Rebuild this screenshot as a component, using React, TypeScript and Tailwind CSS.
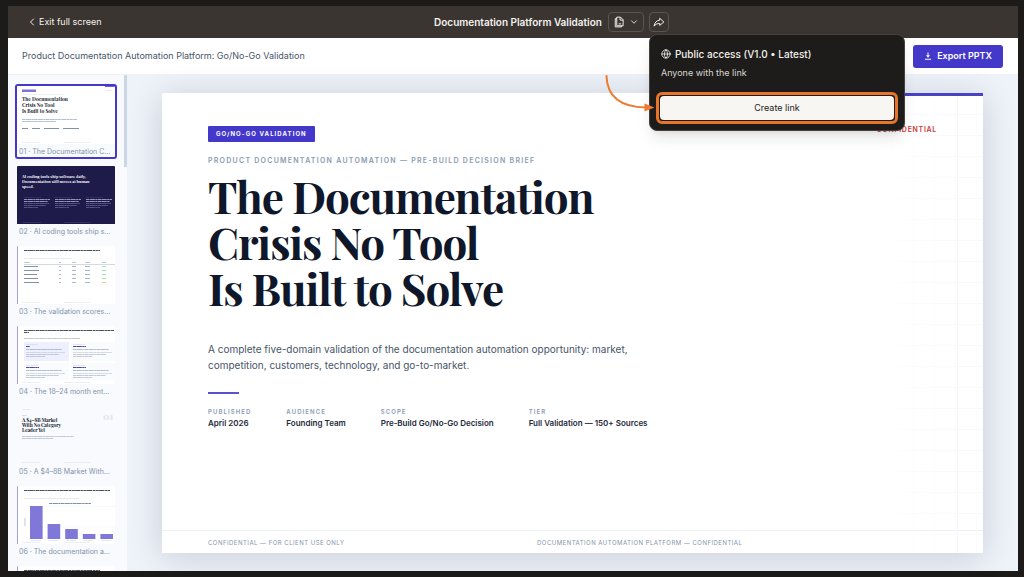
import type { FunctionComponent, ReactNode } from "react";
import { ChevronDown, ChevronLeft, Globe } from "lucide-react";

const META = [
  { label: "Published", value: "April 2026" },
  { label: "Audience", value: "Founding Team" },
  { label: "Scope", value: "Pre-Build Go/No-Go Decision" },
  { label: "Tier", value: "Full Validation — 150+ Sources" },
];

const SERIF = "'Playfair Display', 'Liberation Serif', serif";

const Thumb: FunctionComponent<{ bg: string; children?: ReactNode }> = ({ bg, children }) => (
  <svg viewBox="0 0 98 58" className="block w-full h-[58px]" preserveAspectRatio="none" aria-hidden="true">
    <rect width="98" height="58" fill={bg} />
    {children}
  </svg>
);

// a row of tiny unreadable copy
const Line = ({ x, y, w, color = "#cbd5e1", h = 1 }: { x: number; y: number; w: number; color?: string; h?: number }) => (
  <path d={`M${x} ${y}h${w}`} stroke={color} strokeWidth={h} strokeDasharray="3.2 0.3 5.4 0.4 2.3 0.3" />
);

const FooterLines = () => (
  <>
    <Line x={5} y={56.5} w={18} color="#dfe5ec" h={0.7} />
    <Line x={47} y={56.5} w={26} color="#dfe5ec" h={0.7} />
  </>
);

const CoverThumb = () => (
  <Thumb bg="#ffffff">
    <rect x="88" width="10" height="0.8" fill="#4338ca" />
    <rect x="5" y="3.5" width="14" height="2.5" fill="#7c74dc" />
    <Line x={5} y={8.5} w={42} color="#dfe4eb" h={0.6} />
    <Line x={89} y={4.5} w={6} color="#f1c9c9" h={0.6} />
    <g fontFamily={SERIF} fontWeight="700" fontSize="5" fill="#0f172a">
      <text x="5" y="15">The Documentation</text>
      <text x="5" y="21">Crisis No Tool</text>
      <text x="5" y="27">Is Built to Solve</text>
    </g>
    <Line x={5} y={33.5} w={55} color="#94a3b8" h={0.7} />
    <Line x={5} y={35.5} w={34} color="#94a3b8" h={0.7} />
    <path d="M5 42.500h6M15 42.500h8M27 42.500h15M46 42.500h16" stroke="#64748b" strokeWidth="0.8" />
    <FooterLines />
  </Thumb>
);

const DarkThumb = () => (
  <Thumb bg="#1e1b4b">
    <g fontFamily={SERIF} fontWeight="700" fontSize="4" fill="#ffffff">
      <text x="5" y="12">AI coding tools ship software daily,</text>
      <text x="5" y="17">Documentation still moves at human</text>
      <text x="5" y="22">speed.</text>
    </g>
    {[7, 38, 69].map((x) => (
      <g key={x}>
        <Line x={x} y={31.5} w={17} color="#413e75" h={0.6} />
        <Line x={x} y={33.5} w={26} color="#b6b4d3" h={0.8} />
        <Line x={x} y={35.5} w={24} color="#b6b4d3" h={0.8} />
        <Line x={x} y={37.5} w={25} color="#6f6b9c" h={0.7} />
        <Line x={x} y={39.5} w={22} color="#6f6b9c" h={0.7} />
        <Line x={x} y={41.5} w={14} color="#6f6b9c" h={0.7} />
      </g>
    ))}
    <Line x={6} y={56.5} w={18} color="#48457a" h={0.5} />
    <Line x={47} y={56.5} w={26} color="#48457a" h={0.5} />
  </Thumb>
);

const TableThumb = () => (
  <Thumb bg="#ffffff">
    <rect width="1" height="58" fill="#a49ee2" />
    <Line x={7} y={4.5} w={76} color="#334155" h={0.9} />
    <Line x={7} y={12.5} w={48} color="#dbe1e9" h={0.7} />
    <path d="M7 18.500h91" stroke="#a9b4c4" strokeWidth="0.5" />
    {[16.5, 20.5, 24.5, 28.5, 32.5, 36.5].map((y, i) => (
      <g key={y} strokeWidth={i ? 0.8 : 0.6}>
        <path d={`M7 ${y}h${i ? 13 + (i % 3) : 6}`} stroke={i ? "#64748b" : "#94a3b8"} />
        <path d={`M42 ${y}h2M55 ${y}h4M68 ${y}h5`} stroke="#94a3b8" />
        <path d={`M85 ${y}h4`} stroke={i === 0 ? "#94a3b8" : i === 5 ? "#f5c96b" : "#86d9a0"} />
      </g>
    ))}
    <FooterLines />
  </Thumb>
);

const CardsThumb = () => (
  <Thumb bg="#ffffff">
    <rect width="1" height="58" fill="#a49ee2" />
    <Line x={7} y={4.5} w={90} color="#334155" h={0.9} />
    <Line x={7} y={6.5} w={5} color="#334155" h={0.9} />
    <Line x={7} y={12.5} w={56} color="#94a3b8" h={0.6} />
    <rect x="7" y="16" width="45" height="19" fill="#eef0ff" />
    <rect x="54" y="16" width="44" height="19" fill="#fafbfd" />
    <rect x="7" y="37" width="45" height="17" fill="#fafbfd" />
    <rect x="54" y="37" width="44" height="17" fill="#fafbfd" />
    {[
      [9, 18.5],
      [56, 18.5],
      [9, 39.5],
      [56, 39.5],
    ].map(([x, y]) => (
      <g key={`${x}-${y}`}>
        <Line x={x} y={y} w={12} h={0.6} />
        <Line x={x} y={y + 2} w={x === 9 && y < 20 ? 4 : 13} color="#4c48a0" h={1.2} />
        <Line x={x} y={y + 5} w={36} color="#94a3b8" h={0.7} />
        <Line x={x} y={y + 8} w={39} color="#c3cbd8" h={0.7} />
        <Line x={x} y={y + 10} w={33} color="#aab4c4" h={0.7} />
        <Line x={x} y={y + 12} w={19} color="#aab4c4" h={0.7} />
      </g>
    ))}
    <FooterLines />
  </Thumb>
);

const ChapterThumb = () => (
  <Thumb bg="#f8fafd">
    <Line x={5} y={3.5} w={8} color="#dbe1e9" h={0.7} />
    <Line x={5} y={9.5} w={5} color="#cbd0f0" h={0.8} />
    <g fontFamily={SERIF} fontWeight="700" fill="#0f172a" fontSize="5" letterSpacing="-0.1">
      <text x="5" y="16">A $4–8B Market</text>
      <text x="5" y="21">With No Category</text>
      <text x="5" y="26">Leader Yet</text>
    </g>
    <text x="86" y="14" fontFamily={SERIF} fontWeight="700" fontSize="10" fill="#dde4ed">
      01
    </text>
    <Line x={5} y={30.5} w={52} color="#a7b3c3" h={0.7} />
    <Line x={5} y={32.5} w={31} color="#a7b3c3" h={0.7} />
    <FooterLines />
  </Thumb>
);

const ChartThumb = () => (
  <Thumb bg="#ffffff">
    <rect width="1" height="58" fill="#a49ee2" />
    <Line x={7} y={4.5} w={86} color="#334155" h={0.9} />
    <Line x={7} y={12.5} w={55} color="#dbe1e9" h={0.7} />
    <Line x={32} y={17.5} w={42} color="#64748b" h={0.8} />
    <path d="M9 20.500h89M9 41h89" stroke="#eef1f5" strokeWidth="0.5" />
    <path d="M8 32v8" stroke="#94a3b8" strokeWidth="0.6" />
    {[33, 15, 10, 5, 5].map((h, i) => (
      <g key={i}>
        <rect x={13 + i * 17.6} y={53 - h} width="12.6" height={h} fill="#8078d8" />
        <Line x={14 + i * 17.6} y={54.5} w={10} h={0.6} />
      </g>
    ))}
    <FooterLines />
  </Thumb>
);

const SLIDES = [
  { caption: "01 · The Documentation C…", thumb: <CoverThumb /> },
  { caption: "02 · AI coding tools ship s…", thumb: <DarkThumb /> },
  { caption: "03 · The validation scores…", thumb: <TableThumb /> },
  { caption: "04 · The 18–24 month ent…", thumb: <CardsThumb /> },
  { caption: "05 · A $4–8B Market With…", thumb: <ChapterThumb /> },
  { caption: "06 · The documentation a…", thumb: <ChartThumb /> },
  { caption: "", thumb: <TableThumb /> },
];

const SharePopover = () => (
  <div className="absolute top-[22px] left-0 z-20 w-[256px] rounded-lg border border-[#45423e] bg-[#1d1c1a] shadow-lg">
    <div className="px-[11px] pt-3 text-[#f3f1ed]">
      <h2 className="flex items-center gap-1 text-[10px] leading-[14px] font-medium whitespace-nowrap">
        <Globe className="h-[10px] w-[10px]" strokeWidth={2} />
        Public access (V1.0 • Latest)
      </h2>
      <p className="mt-1 text-[9px] leading-4 text-[#d9d6d1]">Anyone with the link</p>
    </div>
    <div className="mx-[6px] mt-[11px] mb-[6px] rounded-md border-[3px] border-[#e8742a] p-px">
      <button type="button" className="block w-full rounded bg-[#f8f6f2] text-center text-[9px] leading-6 text-[#1d1c1a]">
        Create link
      </button>
    </div>
    <svg className="absolute top-[39px] -left-12 h-10 w-[54px]" viewBox="0 0 54 40" fill="none" aria-hidden="true">
      <path d="M4.500 2C5 20 15 33 44 33.500" stroke="#ee7a30" strokeWidth="2" strokeLinecap="round" />
      <path d="M42.500 29.500l10 4-10 4z" fill="#ee7a30" />
    </svg>
  </div>
);

const TopBar = () => (
  <header className="grid h-8 shrink-0 grid-cols-[1fr_auto_1fr] items-center bg-[#3a3530] pr-2 pl-[18px] text-[#f3f1ed]">
    <button type="button" className="flex items-center gap-px justify-self-start text-[9px]">
      <ChevronLeft className="h-3 w-3" strokeWidth={2} />
      Exit full screen
    </button>
    <h1 className="text-[10px] font-semibold whitespace-nowrap">Documentation Platform Validation</h1>
    <div className="flex items-center gap-[5px] pl-[6px]">
      <button
        type="button"
        aria-label="Versions"
        className="flex h-5 w-9 items-center justify-center gap-1 rounded border border-[#5a554f]"
      >
        <svg className="h-3 w-3" viewBox="0 0 16 16" fill="none" stroke="currentColor" strokeWidth="1.300" strokeLinejoin="round">
          <path d="M5 3.500H3v11h8.500V13M5 1.500h5l3.500 3.500V13H5zM9.500 1.500v4h4M7.500 10.500h3.500" />
        </svg>
        <ChevronDown className="h-[10px] w-[10px]" strokeWidth={2} />
      </button>
      <div className="relative">
        <button
          type="button"
          aria-label="Share"
          className="flex h-5 w-5 items-center justify-center rounded border border-[#5a554f]"
        >
          <svg className="h-3 w-3" viewBox="0 0 16 16" fill="none" stroke="currentColor" strokeWidth="1.300" strokeLinejoin="round">
            <path d="M9 3l5.500 5L9 12.500V10C5.500 10 3 11 1.500 13.500 2 9 4.500 6 9 5.500z" />
          </svg>
        </button>
        <SharePopover />
      </div>
    </div>
  </header>
);

const Sidebar = () => (
  <aside className="flex w-[119px] shrink-0 overflow-hidden bg-[#f8fafd]">
    <ul className="flex w-[109px] flex-col gap-[5px] pt-[9px] pl-[7px]">
      {SLIDES.map((slide, i) => (
        <li key={slide.caption}>
          <button
            type="button"
            className={`block w-full overflow-hidden rounded-[3px] border-2 text-left ${
              i === 0 ? "border-[#4338ca]" : "border-transparent"
            }`}
          >
            {slide.thumb}
            <span className="block pt-[3px] pl-[2px] text-[7px] leading-[10px] whitespace-nowrap text-[#8292ab]">
              {slide.caption}
            </span>
          </button>
        </li>
      ))}
    </ul>
    <div className="ml-auto h-[92px] w-[3px] bg-[#cdd6e6]" />
  </aside>
);

const Slide = () => (
  <article className="relative flex flex-1 flex-col bg-white shadow-[0_4px_32px_rgba(15,23,42,0.16)]">
    {/* faint grid on the right edge */}
    <div className="pointer-events-none absolute inset-y-0 right-0 w-28 bg-[linear-gradient(to_right,#fafbfc_1px,transparent_1px),linear-gradient(to_bottom,#f8f9fb_1px,transparent_1px)] mask-l-from-20% bg-[size:21px_21px]" />
    <div className="absolute inset-y-0 right-[25px] w-px bg-[#f6f7f9]" />
    <div className="absolute top-0 right-0 h-[3px] w-24 bg-[#4b41c4]" />
    <span className="absolute top-8 right-[46px] text-[7px] leading-[10px] font-semibold tracking-widest text-[#c93a3a]">
      CONFIDENTIAL
    </span>

    <div className="flex-1 px-[46px] pt-[33px]">
      <span className="block w-fit rounded-[1px] bg-[#4338ca] px-2 text-[6px] leading-4 font-bold tracking-[0.18em] text-white uppercase">
        Go/No-Go Validation
      </span>
      <p className="mt-[15px] text-[7px] leading-2 font-semibold tracking-[0.18em] text-[#8b9bb3] uppercase">
        Product Documentation Automation — Pre-Build Decision Brief
      </p>
      <h2 className="mt-2 font-['Playfair_Display','Liberation_Serif',serif] text-[44px] leading-[46px] font-bold tracking-tight text-[#0f172a]">
        The Documentation
        <br />
        Crisis No Tool
        <br />
        Is Built to Solve
      </h2>
      <p className="mt-[30px] max-w-[460px] text-[10px] leading-4 text-[#475569]">
        A complete five-domain validation of the documentation automation opportunity: market, competition, customers,
        technology, and go-to-market.
      </p>
      <div className="mt-[19px] h-[2px] w-[31px] bg-[#5b50cf]" />
      <dl className="mt-[14px] flex gap-[35px]">
        {META.map((item) => (
          <div key={item.label}>
            <dt className="text-[6px] leading-2 font-semibold tracking-[0.18em] text-[#8b9bb3] uppercase">{item.label}</dt>
            <dd className="mt-px text-[8px] leading-3 font-semibold text-[#1e293b]">{item.value}</dd>
          </div>
        ))}
      </dl>
    </div>

    <footer className="grid h-[23px] grid-cols-[329px_1fr] items-center border-t border-[#eef1f5] px-[46px] text-[6px] tracking-[0.08em] text-[#8494aa]">
      <span>CONFIDENTIAL — FOR CLIENT USE ONLY</span>
      <span>DOCUMENTATION AUTOMATION PLATFORM — CONFIDENTIAL</span>
    </footer>
  </article>
);

const App: FunctionComponent = () => {
  return (
    <div className="flex h-screen flex-col bg-[#1c1b19] pt-[6px] pr-[6px] pb-[6px] pl-2 font-['Inter','Liberation_Sans',sans-serif]">
      <div className="flex min-h-0 flex-1 flex-col rounded-t-[3px] bg-white">
        <TopBar />
        <div className="flex h-[37px] shrink-0 items-center justify-between border-b border-[#eef1f5] pr-[15px] pl-[14px]">
          <p className="text-[9px] text-[#475569]">Product Documentation Automation Platform: Go/No-Go Validation</p>
          <button
            type="button"
            className="flex h-[23px] items-center gap-[5px] rounded-[3px] bg-[#4338ca] px-[11px] text-[9px] font-semibold text-white"
          >
            <svg className="h-2 w-2" viewBox="0 0 16 16" fill="none" stroke="currentColor" strokeWidth="2" aria-hidden="true">
              <path d="M8 1v8M2 14.500h12" />
              <path d="M4 6.500h8L8 11.500z" fill="currentColor" stroke="none" />
            </svg>
            Export PPTX
          </button>
        </div>
        <div className="flex min-h-0 flex-1">
          <Sidebar />
          <main className="flex min-w-0 flex-1 bg-[#eef2f9] px-[35px] py-[18px]">
            <Slide />
          </main>
        </div>
      </div>
    </div>
  );
};

export default App;
